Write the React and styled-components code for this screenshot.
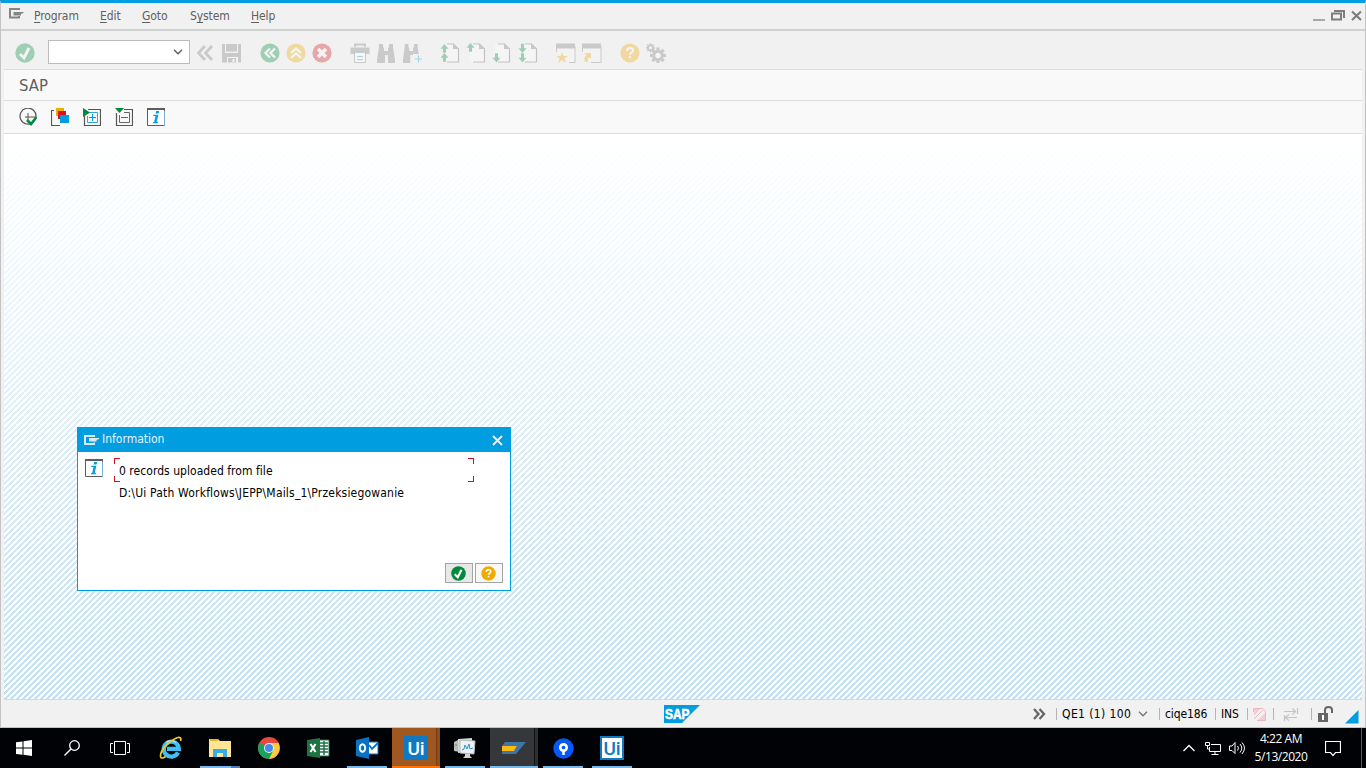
import React from "react";
import styled, { createGlobalStyle, css } from "styled-components";

const Global = createGlobalStyle`
  * { box-sizing: border-box; }
  body { margin: 0; overflow: hidden; background: #000; }
  svg { display: block; flex: none; }
`;

const ui = css`
  font-family: "DejaVu Sans Condensed", "DejaVu Sans", Tahoma, sans-serif;
  font-stretch: condensed;
`;

const Screen = styled.div`
  ${ui}
  width: 1366px;
  height: 768px;
  display: flex;
  flex-direction: column;
  font-size: 12px;
  color: #000;
`;

const SapWindow = styled.div`
  position: relative;
  height: 728px;
  display: flex;
  flex-direction: column;
  background: #f1f1f1;
  border: 1px solid #c3c3c3;
  border-top: 3px solid #009de0;
`;

const MenuBar = styled.div`
  height: 28px;
  display: flex;
  align-items: flex-start;
  padding: 4px 6px 0 7px;
  border-bottom: 2px solid #cfd0d0;
  color: #5f5f5f;
`;

const MenuItem = styled.span`
  line-height: 18px;
  letter-spacing: -0.1px;
  width: ${(p) => p.$w}px;
  white-space: nowrap;
  u { text-underline-offset: 2px; text-decoration-thickness: 1px; }
`;

const Spacer = styled.div`
  flex: 1;
`;

const WindowButtons = styled.div`
  display: flex;
  gap: 5px;
  margin-right: -4px;
`;

const ToolBar = styled.div`
  height: 39px;
  margin: 0 3px;
  padding: 4px 0 0 10px;
  display: flex;
  align-items: center;
  border-bottom: 1px solid #dcdcdc;
`;

const CommandField = styled.div`
  width: 142px;
  height: 24px;
  margin: 0 5px 0 13px;
  padding-right: 6px;
  display: flex;
  align-items: center;
  justify-content: flex-end;
  background: #fff;
  border: 1px solid #bcbcbc;
`;

const IconGroup = styled.div`
  display: flex;
  align-items: center;
  gap: ${(p) => p.$gap ?? 6}px;
  margin-left: ${(p) => p.$left ?? 18}px;
  padding-top: 2px;
  opacity: 0.33;
`;

const TitleBar = styled.div`
  height: 31px;
  margin: 0 3px;
  padding-left: 15px;
  background: #f9f9f9;
  border-bottom: 1px solid #dcdcdc;
  color: #5f5f5f;
  font-size: 16.5px;
  line-height: 31px;
`;

const AppBar = styled.div`
  height: 33px;
  margin: 0 3px;
  padding: 0 15px;
  display: flex;
  align-items: center;
  gap: 14px;
  background: #f9f9f9;
  border-bottom: 1px solid #dcdcdc;
`;

const Canvas = styled.div`
  flex: 1;
  margin: 0 3px;
  border-bottom: 1px solid #d6d9da;
  background:
    linear-gradient(rgba(255, 255, 255, 1), rgba(255, 255, 255, 0)),
    linear-gradient(135deg, #c3e0f2 0 29.2%, #fff 29.2% 54.2%, #c3e0f2 54.2% 79.2%, #fff 79.2%) 0 0 / 6px 6px;
`;

const Dialog = styled.div`
  position: absolute;
  left: 76px;
  top: 424px;
  width: 434px;
  height: 164px;
  display: flex;
  flex-direction: column;
  background: #fff;
  border: 1px solid #009de0;
`;

const DialogTitle = styled.div`
  height: 24px;
  padding: 0 7px 0 6px;
  display: flex;
  align-items: center;
  background: #009de0;
  color: #e6f3fa;
  span { margin-left: 3px; line-height: 22px; padding-bottom: 2px; }
`;

const DialogBody = styled.div`
  flex: 1;
  display: flex;
  padding: 7px 0 0 7px;
`;

const Message = styled.div`
  margin-left: 11px;
`;

const FocusLine = styled.div`
  position: relative;
  width: 360px;
  height: 24px;
  padding-left: 5px;
  margin-top: -1px;
  line-height: 26px;
  letter-spacing: 0.04px;
  white-space: nowrap;
`;

const Corner = styled.i`
  position: absolute;
  width: 6px;
  height: 6px;
  ${(p) => p.$v}: 0;
  ${(p) => p.$h}: 0;
  border: 0 solid #d0121b;
  border-${(p) => p.$v}-width: 1px;
  border-${(p) => p.$h}-width: 1px;
`;

const TextLine = styled.div`
  padding-left: 5px;
  line-height: 22px;
  letter-spacing: 0.19px;
  white-space: nowrap;
`;

const DialogActions = styled.div`
  display: flex;
  justify-content: flex-end;
  gap: 2px;
  padding: 0 7px 7px 0;
`;

const ActionButton = styled.button`
  width: 28px;
  height: 20px;
  padding: 0 1px 0 0;
  display: flex;
  align-items: center;
  justify-content: center;
  background: ${(p) => (p.$active ? "#e8e8e8" : "#f8f8f8")};
  border: 1px solid #a5a5a5;
`;

const StatusBar = styled.div`
  height: 27px;
  padding-left: 663px;
  display: flex;
  align-items: center;
`;

const StatusInfo = styled.div`
  height: 27px;
  margin-left: 332px;
  display: flex;
  align-items: center;
  padding-top: 1px;
`;

const Cell = styled.span`
  display: flex;
  align-items: center;
  width: ${(p) => p.$w}px;
  height: 12px;
  padding-left: 5px;
  line-height: 14px;
  letter-spacing: ${(p) => p.$track || "-0.1px"};
  border-left: 1px solid #b4b4b4;
  white-space: pre;
`;

const CellGap = styled.div`
  width: 7px;
`;

const ResizeGrip = styled.div`
  padding-top: 5px;
`;

const TaskBar = styled.div`
  height: 40px;
  display: flex;
  background: #010206;
  color: #fff;
`;

const Slot = styled.div`
  width: 48px;
  height: 40px;
  margin-right: ${(p) => p.$gap ?? 1}px;
  display: flex;
  align-items: center;
  justify-content: center;
  position: relative;
  background: ${(p) => p.$bg || "transparent"};
`;

const RunMark = styled.i`
  position: absolute;
  bottom: 0;
  left: ${(p) => (p.$full ? 0 : 4)}px;
  right: ${(p) => (p.$full ? 0 : 4)}px;
  height: 2px;
  background: ${(p) => p.$color || "#76b9ed"};
  border-right: ${(p) => (p.$stack ? "9px solid #527fa8" : "0")};
`;

const StackEdge = styled.i`
  position: absolute;
  top: 0;
  bottom: 0;
  right: 0;
  width: 4px;
  background: ${(p) => p.$bg};
  border-left: 1px solid ${(p) => p.$line};
`;

const UiTile = styled.div`
  width: 24px;
  height: 24px;
  display: flex;
  align-items: center;
  justify-content: center;
  font: 500 19px/21px Roboto, sans-serif;
  letter-spacing: -0.2px;
  border: 2px solid #0f79c4;
  background: ${(p) => (p.$invert ? "#fff" : "#0f79c4")};
  color: ${(p) => (p.$invert ? "#0f79c4" : "#fff")};
`;

const Tray = styled.div`
  display: flex;
  align-items: center;
`;

const Clock = styled.div`
  width: 72px;
  margin-right: 8px;
  text-align: center;
  font: 12px/18px "Open Sans", sans-serif;
  letter-spacing: -0.45px;
`;

const PeekEdge = styled.div`
  height: 40px;
  margin-left: 20px;
  width: 5px;
  border-left: 1px solid #55585c;
`;

const S = ({ w = 20, h = w, children, ...rest }) => (
  <svg width={w} height={h} viewBox={`0 0 ${w} ${h}`} fill="none" {...rest}>{children}</svg>
);

const SystemMenuIcon = ({ color }) => (
  <S w={15} h={12}>
    <path d="M11 2H1v8h9V8.500" stroke={color} strokeWidth="2" />
    <path d="M5 4h10v1l-2.500 1v1.500H5z" fill={color} />
  </S>
);

const Check = ({ size = 20, bg }) => (
  <svg width={size} height={size} viewBox="0 0 20 20">
    <circle cx="10" cy="10" r="9.700" fill={bg} />
    <path d="M5 11l4 4 5-10" stroke="#fff" strokeWidth="2.800" fill="none" />
  </svg>
);

const Round = ({ color, children }) => (
  <S>
    <circle cx="10" cy="10" r="9.600" fill={color} />
    <g stroke="#fff" strokeWidth="2.200">{children}</g>
  </S>
);

const Chevron = ({ color, sw = 1.4 }) => (
  <S w={10} h={6}><path d="M1 .8l4 4 4-4" stroke={color} strokeWidth={sw} /></S>
);

const Help = ({ size = 20, color }) => (
  <svg width={size} height={size} viewBox="0 0 20 20">
    <circle cx="10" cy="10" r="9.600" fill={color} />
    <path d="M7 8q0-3 3-3t3 2.500q0 1.300-1.500 2.200-1.500.8-1.500 2" stroke="#fff" strokeWidth="2" fill="none" />
    <path d="M8.900 13.200h2.200v2h-2.200z" fill="#fff" />
  </svg>
);

const Page = ({ x, children }) => (
  <S>
    <path d={`M${x} 1h9l5.500 5v13H${x}z`} fill="#fff" />
    <path d={`M${x + 3} 1h6.500l5 5v13H${x + 3}`} stroke="#666" strokeWidth="1.200" />
    <path d={`M${x + 9} .5l5.500 5.500h-5.500z`} fill="#777" />
    {children}
  </S>
);
const Up = ({ x, y }) => <path d={`M${x} ${y}l4 4.700h-2.500v4h-3v-4h-2.500z`} fill="#008a3b" />;
const Down = ({ x, y }) => <path d={`M${x} ${y}l4-4.700h-2.500v-4.500h-3v4.500h-2.500z`} fill="#008a3b" />;

const Binoculars = ({ plus }) => (
  <S>
    <path d="M3 1h4v3l1 1v3h4V5l1-1V1h4v3l2 13v3h-7v-8h-3v8H1v-3L3 4z" fill="#7c7c7c" transform={plus ? "scale(.92 1)" : undefined} />
    {plus && <><path d="M11 11h10v10H11z" fill="#f1f1f1" /><path d="M16.500 12.500v7M13 16h7" stroke="#009de0" strokeWidth="1.200" /></>}
  </S>
);

const gearTeeth = (cx, cy, r, w) =>
  [0, 45, 90, 135].map((a) => (
    <rect key={a} x={cx - w / 2} y={cy - r} width={w} height={r * 2} fill="#7c7c7c" transform={`rotate(${a} ${cx} ${cy})`} />
  ));

const InfoIcon = () => (
  <S w={18}>
    <path d="M.5 1h17v16.500H.5z" fill="#fff" stroke="#5d5d5d" />
    <path d="M0 1h18" stroke="#5d5d5d" strokeWidth="2" />
    <path d="M17.500 3v15" stroke="#79afd0" />
    <path d="M9.200 3h3l-.6 2.400h-3zM6.500 6.800h4.900l-1.700 7h1.400l-.4 1.400H5.800l.4-1.300h1L8.500 8.100H6.200z" fill="#009de0" />
  </S>
);

const SapWedge = () => (
  <S w={36} h={18}>
    <path d="M0 0h36L18 18H0z" fill="#009de0" />
    <text x="1" y="13.800" textLength="24.500" lengthAdjust="spacingAndGlyphs" fill="#fff" stroke="#fff" strokeWidth=".6" fontFamily="Liberation Sans, sans-serif" fontWeight="700" fontSize="14">SAP</text>
  </S>
);

export default function App() {
  return (
    <Screen>
      <Global />
      <SapWindow>
        <MenuBar>
          <S w={26} h={18}>
            <path d="M12 2H2v8.500h9V9" stroke="#858585" strokeWidth="2" />
            <path d="M5.500 5H15.500v1L13 7v1.500H5.500z" fill="#858585" />
          </S>
          <MenuItem $w={66}><u>P</u>rogram</MenuItem>
          <MenuItem $w={42}><u>E</u>dit</MenuItem>
          <MenuItem $w={48}><u>G</u>oto</MenuItem>
          <MenuItem $w={61}>S<u>y</u>stem</MenuItem>
          <MenuItem $w={40}><u>H</u>elp</MenuItem>
          <Spacer />
          <WindowButtons>
            <S w={13} h={14}><path d="M0 13h12" stroke="#a8a8a8" strokeWidth="2" /></S>
            <S w={15} h={14}><path d="M1 7h9v6H1z" stroke="#7d7d7d" strokeWidth="2" transform="translate(0 -.500)" /><path d="M3 4h10v7" stroke="#7d7d7d" strokeWidth="2" /></S>
            <S w={12} h={14}><path d="M1 4.500l9 8.500m0-8.500l-9 8.500" stroke="#7d7d7d" strokeWidth="2.200" /></S>
          </WindowButtons>
        </MenuBar>

        <ToolBar>
          <IconGroup $left={1}><Check bg="#008a3b" /></IconGroup>
          <CommandField><Chevron color="#5d5d5d" /></CommandField>
          <IconGroup $left={0} $gap={7}>
            <S><path d="M10 3l-6.500 7L10 17M17 3l-6.500 7L17 17" stroke="#7c7c7c" strokeWidth="2.800" /></S>
            <S><path d="M0 1h3v9h13V1h3v18.500h-3V14H5v5.500H0z" fill="#7c7c7c" /><path d="M4 1h11v7.500H4z" fill="#7c7c7c" /><path d="M6 15h8v4.500H6z" fill="#7c7c7c" /><path d="M10.500 16h2v3h-2z" fill="#fff" /></S>
          </IconGroup>
          <IconGroup>
            <Round color="#008a3b"><path d="M10 5.500L5.500 10l4.500 4.500M15 5.500L10.500 10l4.500 4.500" /></Round>
            <Round color="#f0ab00"><path d="M5 10l5-4.500 5 4.500M5 15l5-4.500 5 4.500" /></Round>
            <Round color="#d9121b"><path d="M6 6l8 8M14 6l-8 8" strokeWidth="3.500" /></Round>
          </IconGroup>
          <IconGroup>
            <S><path d="M5 4V1.500h10V4" stroke="#7c7c7c" strokeWidth="1.800" /><path d="M.5 5.500q0-1 1-1h17q1 0 1 1V11H.5z" fill="#7c7c7c" /><path d="M4.500 10v9.500h11V10" fill="#fff" stroke="#7c7c7c" /><path d="M7 13.500h6M7 16.500h6" stroke="#009de0" /></S>
            <Binoculars />
            <Binoculars plus />
          </IconGroup>
          <IconGroup>
            <Page x={4}><Up x={4.500} y={1} /><Up x={4.500} y={10} /></Page>
            <Page x={4}><Up x={4.500} y={0} /></Page>
            <Page x={3}><Down x={4.500} y={19.500} /></Page>
            <Page x={4}><Down x={4.500} y={10} /><Down x={4.500} y={19.500} /></Page>
          </IconGroup>
          <IconGroup>
            <S><path d="M.5 9V3h18.500v16.500H13" fill="#fafafa" stroke="#7c7c7c" /><path d="M0 3h19" stroke="#7c7c7c" strokeWidth="5" /><path d="M6 9l1.500 4H12l-3.500 2.500L10 20l-4-2.800L2 20l1.500-4.500L0 13h4.500z" fill="#f0ab00" /></S>
            <S><path d="M.5 9V3h18.500v16.500H9" fill="#fafafa" stroke="#7c7c7c" /><path d="M0 3h19" stroke="#7c7c7c" strokeWidth="5" /><path d="M2 10h7v6l-2-2q-2 2-1 5H3q-2-4 1.500-7z" fill="#f0ab00" /></S>
          </IconGroup>
          <IconGroup>
            <Help color="#f0ab00" />
            <S>
              {gearTeeth(12, 12.5, 8, 3.2)}<circle cx="12" cy="12.500" r="5.800" fill="#7c7c7c" /><circle cx="12" cy="12.500" r="2.700" fill="#fff" />
              {gearTeeth(4.5, 4.8, 4.5, 1.8)}<circle cx="4.500" cy="4.800" r="3.200" fill="#7c7c7c" /><circle cx="4.500" cy="4.800" r="1.500" fill="#fff" />
            </S>
          </IconGroup>
        </ToolBar>

        <TitleBar>SAP</TitleBar>

        <AppBar>
          <S w={18}>
            <path d="M14.500 14A8 8 0 1 1 17 9" stroke="#555" strokeWidth="1.200" /><path d="M9 5v8M6 9h11" stroke="#555" />
            <path d="M8 12l4 4 5.500-7" stroke="#008a3b" strokeWidth="2.500" />
          </S>
          <S w={18}>
            <path d="M3 2.500H.5v15H9" stroke="#555" strokeWidth="1.200" />
            <path d="M5 0h8v8H5z" fill="#f0ab00" /><path d="M7 3h8v8H7z" fill="#d9121b" /><path d="M9 7h9v8H9z" fill="#009de0" />
          </S>
          <S w={18}>
            <path d="M1.500 8v9.500h16V1.500H5" stroke="#555" strokeWidth="1.200" /><path d="M5 4.500h9.500v10H4.500V8" stroke="#3ba2d5" /><path d="M9.500 6v7M6 9.500h7" stroke="#009de0" strokeWidth="1.200" />
            <path d="M0 0l7 4.500L0 9z" fill="#008a3b" />
          </S>
          <S w={18}>
            <path d="M1.500 5v12.500h16V1.500H9" stroke="#555" strokeWidth="1.200" /><path d="M9 4.500h5.500v10H4.500V7M6 9.500h7" stroke="#666" />
            <path d="M0 0h9L4.500 5z" fill="#008a3b" />
          </S>
          <InfoIcon />
        </AppBar>

        <Canvas />

        <StatusBar>
          <SapWedge />
          <StatusInfo>
            <S w={24} h={12}><path d="M2 1l4.500 5L2 11M7.500 1L12 6l-4.500 5" stroke="#666" strokeWidth="2.300" /></S>
            <Cell $w={103} $track="0.4px">QE1 (1) 100<CellGap /><Chevron color="#777" /></Cell>
            <Cell $w={56}>ciqe186</Cell>
            <Cell $w={32}>INS</Cell>
            <Cell $w={26}><S w={13} h={13}><path d="M1 1h6L1 8zM12 5v7H5z" fill="#f3cdd3" /><path d="M.5 4V.500h9L12.500 3v9.500H4M1 11L10 2" stroke="#eab9c0" /></S></Cell>
            <Cell $w={38}><S w={22} h={13}><path d="M5 3.500h12M13.500 .5l3 3-3 3M18 9.500H6M10 6.500L6 9.500l4 3M18.500 0v6M5.500 7v6" stroke="#c4c4c4" strokeWidth="1.200" /></S></Cell>
            <Cell $w={34}><S w={18} h={16}><path d="M8 8V4q0-3 3.500-3T15 4v3" stroke="#666" strokeWidth="2" /><path d="M1 7h10v9H1z" fill="#666" /><path d="M5 9h2v5H5z" fill="#fff" /></S></Cell>
            <ResizeGrip><S w={14} h={14}><path d="M13.500 0v13.500H0z" fill="#009de0" /></S></ResizeGrip>
          </StatusInfo>
        </StatusBar>

        <Dialog>
          <DialogTitle>
            <SystemMenuIcon color="#d9e9f1" />
            <span>Information</span>
            <Spacer />
            <S w={11}><path d="M1 1l9 9M10 1l-9 9" stroke="#e0eef5" strokeWidth="2" /></S>
          </DialogTitle>
          <DialogBody>
            <InfoIcon />
            <Message>
              <FocusLine>
                <Corner $v="top" $h="left" /><Corner $v="top" $h="right" />
                <Corner $v="bottom" $h="left" /><Corner $v="bottom" $h="right" />
                0 records uploaded from file
              </FocusLine>
              <TextLine>D:\Ui Path Workflows\JEPP\Mails_1\Przeksiegowanie</TextLine>
            </Message>
          </DialogBody>
          <DialogActions>
            <ActionButton $active aria-label="Continue"><Check size={15} bg="#008a3b" /></ActionButton>
            <ActionButton aria-label="Help"><Help size={15} color="#f0ab00" /></ActionButton>
          </DialogActions>
        </Dialog>
      </SapWindow>

      <TaskBar>
        <Slot $gap={0}><S w={16}><path d="M0 2.300l6.500-.9v6.200H0zM7.500 1.200L16 0v7.600H7.500zM0 8.600h6.500v6.200L0 13.900zM7.500 8.600H16V16l-8.500-1.200z" fill="#fff" /></S></Slot>
        <Slot $gap={0}><S w={16}><circle cx="10.500" cy="5.500" r="4.800" stroke="#fff" strokeWidth="1.300" /><path d="M7 9L.5 15.500" stroke="#fff" strokeWidth="1.400" /></S></Slot>
        <Slot $gap={3}><S w={20} h={16}><path d="M4.500 1.500h11v13h-11zM3 3.500H.5v9H3M17 3.500h2.500v9H17" stroke="#fff" /></S></Slot>
        <Slot>
          <S w={24}>
            <path d="M19 16.500a7.500 7.500 0 1 1 .8-3.700H8" stroke="#3fc0f5" strokeWidth="4.300" />
            <path d="M7 6.500a8 8 0 0 1 10 0" stroke="#a9e7ff" strokeWidth="1.500" />
            <path d="M21.500 5c1.500-4-1.500-4.500-6-2C8 6.500 1 15 1.500 20.500c.3 2.500 3 1.500 5 0" stroke="#f5c927" strokeWidth="1.700" />
          </S>
        </Slot>
        <Slot>
          <S w={22} h={20}><path d="M0 1h9l2 2h11v16H0z" fill="#ffe694" /><path d="M1 1h8v2H1z" fill="#e7b62f" /><path d="M4 19v-8h14v8h-4v-4H8v4z" fill="#35ade8" /></S>
          <RunMark $stack />
        </Slot>
        <Slot>
          <S w={24}>
            <circle cx="12" cy="12" r="11" fill="#e9483d" />
            <path d="M12 12L2.500 6.500A11 11 0 0 0 12 23l5-8z" fill="#17a35b" />
            <path d="M12 12l4.300 2.500L12 23A11 11 0 0 0 21.500 7H12z" fill="#fbcb3c" />
            <circle cx="12" cy="12" r="5" fill="#f4f4f4" /><circle cx="12" cy="12" r="4" fill="#4688f1" />
          </S>
        </Slot>
        <Slot>
          <S w={24} h={22}><path d="M12 3h11v16H12z" fill="#fff" stroke="#207245" /><path d="M14 6h8M14 9h8M14 12h8M14 15h8M18 4v14" stroke="#207245" strokeWidth="1.500" /><path d="M1 3l13-2v20L1 19z" fill="#207245" /><path d="M4.500 7l5 8M9.500 7l-5 8" stroke="#fff" strokeWidth="2" /></S>
        </Slot>
        <Slot>
          <S w={23} h={22}><path d="M11 5h11v12H11z" fill="#fff" stroke="#0872c4" /><path d="M13 8l3 4 6-6" stroke="#0872c4" strokeWidth="1.800" /><path d="M0 3l13-3v22L0 19z" fill="#0872c4" /><ellipse cx="6.500" cy="11" rx="2.700" ry="3.800" stroke="#fff" strokeWidth="1.900" /></S>
          <RunMark />
        </Slot>
        <Slot $bg="#a05720"><UiTile>Ui</UiTile><StackEdge $bg="#8d4e20" $line="#763f18" /><RunMark $full $color="#ff7300" /></Slot>
        <Slot>
          <S w={24} h={22}>
            <path d="M1 5l6-3v13l-6-1z" fill="#b8bcba" /><path d="M2 8h2" stroke="#77bb39" strokeWidth="2" />
            <path d="M5 2l14-1v14l-14 1z" fill="#d3d6d6" /><path d="M7 3l15 1-1 13-14-1z" fill="#edf3f5" stroke="#b5bab9" />
            <path d="M9 13l2-1 1-4 2 4 2-5 1 5 3-1" stroke="#2a91ce" /><path d="M12 17h5v2l2 2h-9l2-2z" fill="#d5d5d5" />
          </S>
          <RunMark />
        </Slot>
        <Slot $bg="#35373a"><S w={24} h={14}><path d="M3 1h21L14 13H0V10h12l3-5H0z" fill="#3d77aa" /><path d="M0 5h15l-3 5H0z" fill="#fcb813" /></S><StackEdge $bg="#2d2e32" $line="#141517" /><RunMark $full /></Slot>
        <Slot><S w={21}><circle cx="10.500" cy="10.500" r="10.200" fill="#0758f8" /><circle cx="10.500" cy="9.500" r="3.200" stroke="#fff" strokeWidth="2.700" /><path d="M10.500 12v5" stroke="#fff" strokeWidth="2.500" /></S><RunMark /></Slot>
        <Slot><UiTile $invert>Ui</UiTile><RunMark /></Slot>
        <Spacer />
        <Tray>
          <S w={22} h={8}><path d="M.5 7L6 1.500 11.500 7" stroke="#fff" strokeWidth="1.300" /></S>
          <S w={24} h={15}><path d="M6 3.500h9.500v7h-11V6M10 10.500v3M6.500 13.500h7M.5 1.500h4v3h-4zM2.500 5v3h2" stroke="#fff" /></S>
          <S w={16} h={14}><path d="M.5 5v4.500H3l3 3v-11L3 5zM8.500 5q2 2 0 4.500M11 3q3.500 4 0 8.500M13 1.500q5 5.500 0 11.500" stroke="#fff" /></S>
          <Clock>4:22 AM<br />5/13/2020</Clock>
          <S w={16} h={17}><path d="M.5 1.500h15v11h-5L8 15.500l-2.500-3h-5z" stroke="#fff" strokeWidth="1.200" /></S>
          <PeekEdge />
        </Tray>
      </TaskBar>
    </Screen>
  );
}
